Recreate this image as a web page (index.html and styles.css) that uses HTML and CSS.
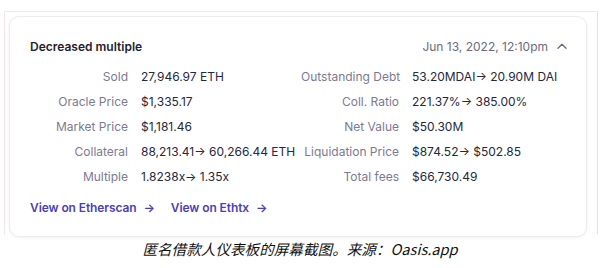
FILE: index.html
```html
<!DOCTYPE html>
<html lang="en">
<head>
    <meta charset="UTF-8">
    <title>Decreased multiple</title>
    <link rel="stylesheet" href="styles.css">
</head>
<body>
    <div class="frame">
        <div class="card">
            <div class="card-head">
                <span class="title">Decreased multiple</span>
                <span class="date">Jun 13, 2022, 12:10pm
                    <svg class="chevron" width="10" height="6" viewBox="0 0 10 6"><path d="M1 5.2L5 1.2L9 5.2" fill="none" stroke="#6b6a80" stroke-width="1.3" stroke-linecap="round" stroke-linejoin="round"/></svg>
                </span>
            </div>
            <div class="details">
                <span class="label">Sold</span><span class="value">27,946.97 ETH</span>
                <span class="label">Outstanding Debt</span><span class="value">53.20MDAI→ 20.90M DAI</span>

                <span class="label">Oracle Price</span><span class="value">$1,335.17</span>
                <span class="label">Coll. Ratio</span><span class="value">221.37%→ 385.00%</span>

                <span class="label">Market Price</span><span class="value">$1,181.46</span>
                <span class="label">Net Value</span><span class="value">$50.30M</span>

                <span class="label">Collateral</span><span class="value">88,213.41→ 60,266.44 ETH</span>
                <span class="label">Liquidation Price</span><span class="value">$874.52→ $502.85</span>

                <span class="label">Multiple</span><span class="value">1.8238x→ 1.35x</span>
                <span class="label">Total fees</span><span class="value">$66,730.49</span>
            </div>
            <div class="links">
                <a href="#">View on Etherscan <span class="arrow">→</span></a>
                <a href="#">View on Ethtx <span class="arrow">→</span></a>
            </div>
        </div>
    </div>
    <p class="caption">匿名借款人仪表板的屏幕截图。来源：Oasis.app</p>
</body>
</html>
```

FILE: styles.css
```css
*{
    margin: 0;
    padding: 0;
    box-sizing: border-box;
}
body{
    background: #fff;
    font-family: Inter, "Noto Sans", sans-serif;
    color: #25273d;
}
.frame{
    margin: 11px 2px 0 4px;
    padding: 4px 10px 0 4px;
    border-top: 1px solid #f6e4ea;
    border-left: 1px solid #f6e4ea;
    border-right: 1px solid #e2e2e2;
    height: 223px;
}
.card{
    height: 221px;
    border: 1px solid #ececec;
    border-radius: 10px;
    box-shadow: 0 1px 3px rgba(0,0,0,0.06);
    padding: 21px 19px 0 20px;
}
.card-head{
    display: flex;
    justify-content: space-between;
    align-items: center;
    height: 16px;
    margin-bottom: 10px;
}
.title{
    font-size: 12px;
    font-weight: 600;
    color: #1f2130;
}
.date{
    font-size: 12px;
    color: #6b6a80;
    display: flex;
    align-items: center;
    gap: 9px;
}
.details{
    display: grid;
    grid-template-columns: 98px 147px 98px 1fr;
    column-gap: 13px;
    grid-auto-rows: 25px;
    align-items: center;
    font-size: 12px;
}
.label{
    text-align: right;
    color: #7b7a92;
    white-space: nowrap;
}
.value{
    color: #25273d;
    white-space: nowrap;
}
.links{
    display: flex;
    gap: 16px;
    margin-top: 11px;
    line-height: 16px;
}
.links a{
    font-size: 12px;
    font-weight: 600;
    letter-spacing: -0.1px;
    color: #4c3fb8;
    text-decoration: none;
}
.arrow{
    margin-left: 4px;
}
.caption{
    text-align: center;
    font-family: "Noto Sans CJK SC", "Noto Sans", sans-serif;
    font-style: italic;
    font-size: 14.6px;
    color: #111;
    margin-top: 4px;
}
```
